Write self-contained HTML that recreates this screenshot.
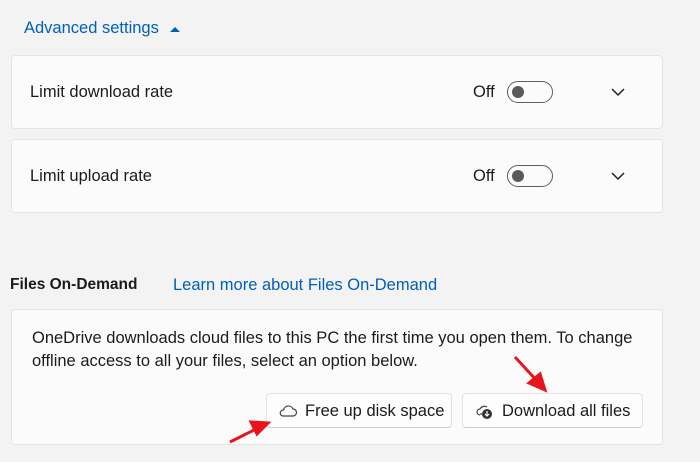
<!DOCTYPE html>
<html><head><style>
body{margin:0;width:700px;height:462px;background:#f3f3f3;font-family:"Liberation Sans",sans-serif;color:#1b1b1b;position:relative;overflow:hidden;font-size:16.5px}
.a{position:absolute}
.card{position:absolute;left:11px;width:650px;background:#fbfbfb;border:1px solid #e5e5e5;border-radius:4px}
.tog{position:absolute;width:46px;height:22px;border:1px solid #5f5f5f;border-radius:11px;box-sizing:border-box}
.tog:after{content:"";position:absolute;left:4px;top:4px;width:12px;height:12px;border-radius:50%;background:#5a5a5a}
.btn{position:absolute;top:393px;height:35px;background:#fdfdfd;border:1px solid #e3e3e3;border-bottom-color:#ccc;border-radius:4px;box-sizing:border-box;font-size:16.5px;line-height:35px}
</style></head><body>
<div class="a" style="left:24px;top:19px;color:#005fb8">Advanced settings</div>
<svg class="a" style="left:169px;top:26px" width="12" height="8"><path d="M1 6L6 1L11 6Z" fill="#005fb8"/></svg>
<div class="card" style="top:55px;height:72px"></div>
<div class="a" style="left:30px;top:83px">Limit download rate</div>
<div class="a" style="left:473px;top:83px">Off</div>
<div class="tog" style="left:507px;top:81px"></div>
<svg class="a" style="left:611px;top:88px" width="14" height="9"><path d="M1 1L7 7L13 1" fill="none" stroke="#222" stroke-width="1.5"/></svg>
<div class="card" style="top:139px;height:72px"></div>
<div class="a" style="left:30px;top:167px">Limit upload rate</div>
<div class="a" style="left:473px;top:167px">Off</div>
<div class="tog" style="left:507px;top:165px"></div>
<svg class="a" style="left:611px;top:172px" width="14" height="9"><path d="M1 1L7 7L13 1" fill="none" stroke="#222" stroke-width="1.5"/></svg>
<div class="a" style="left:10px;top:276px;font-weight:bold;font-size:15.5px">Files On-Demand</div>
<div class="a" style="left:173px;top:276px;color:#005fb8">Learn more about Files On-Demand</div>
<div class="card" style="top:309px;height:134px"></div>
<div class="a" style="left:32px;top:327px;line-height:23px;width:625px">OneDrive downloads cloud files to this PC the first time you open them. To change offline access to all your files, select an option below.</div>
<div class="btn" style="left:266px;width:186px"><svg class="a" style="left:11px;top:10px" width="20" height="14"><path d="M5 12h10a3.5 3.5 0 0 0 0-7a5 5 0 0 0-9.5 1a3 3 0 0 0-.5 6z" fill="none" stroke="#444" stroke-width="1.2"/></svg><span style="position:absolute;left:38px">Free up disk space</span></div>
<div class="btn" style="left:462px;width:181px"><svg class="a" style="left:12px;top:9px" width="22" height="18"><path d="M5 11h2M12 4a5 5 0 0 0-7 2a3 3 0 0 0 0 6" fill="none" stroke="#444" stroke-width="1.2"/><circle cx="12" cy="11" r="5" fill="#333"/><path d="M12 8v5M10 11l2 2l2-2" stroke="#fff" stroke-width="1.2" fill="none"/></svg><span style="position:absolute;left:39px">Download all files</span></div>
<svg class="a" style="left:0;top:0" width="700" height="462"><g stroke="#e8141b" stroke-width="3" fill="#e8141b"><line x1="515" y1="357" x2="538" y2="382"/><path d="M545 390L529 383L540 374Z"/><line x1="230" y1="442" x2="258" y2="428"/><path d="M268 423L251 422L257 434Z"/></g></svg>
</body></html>
